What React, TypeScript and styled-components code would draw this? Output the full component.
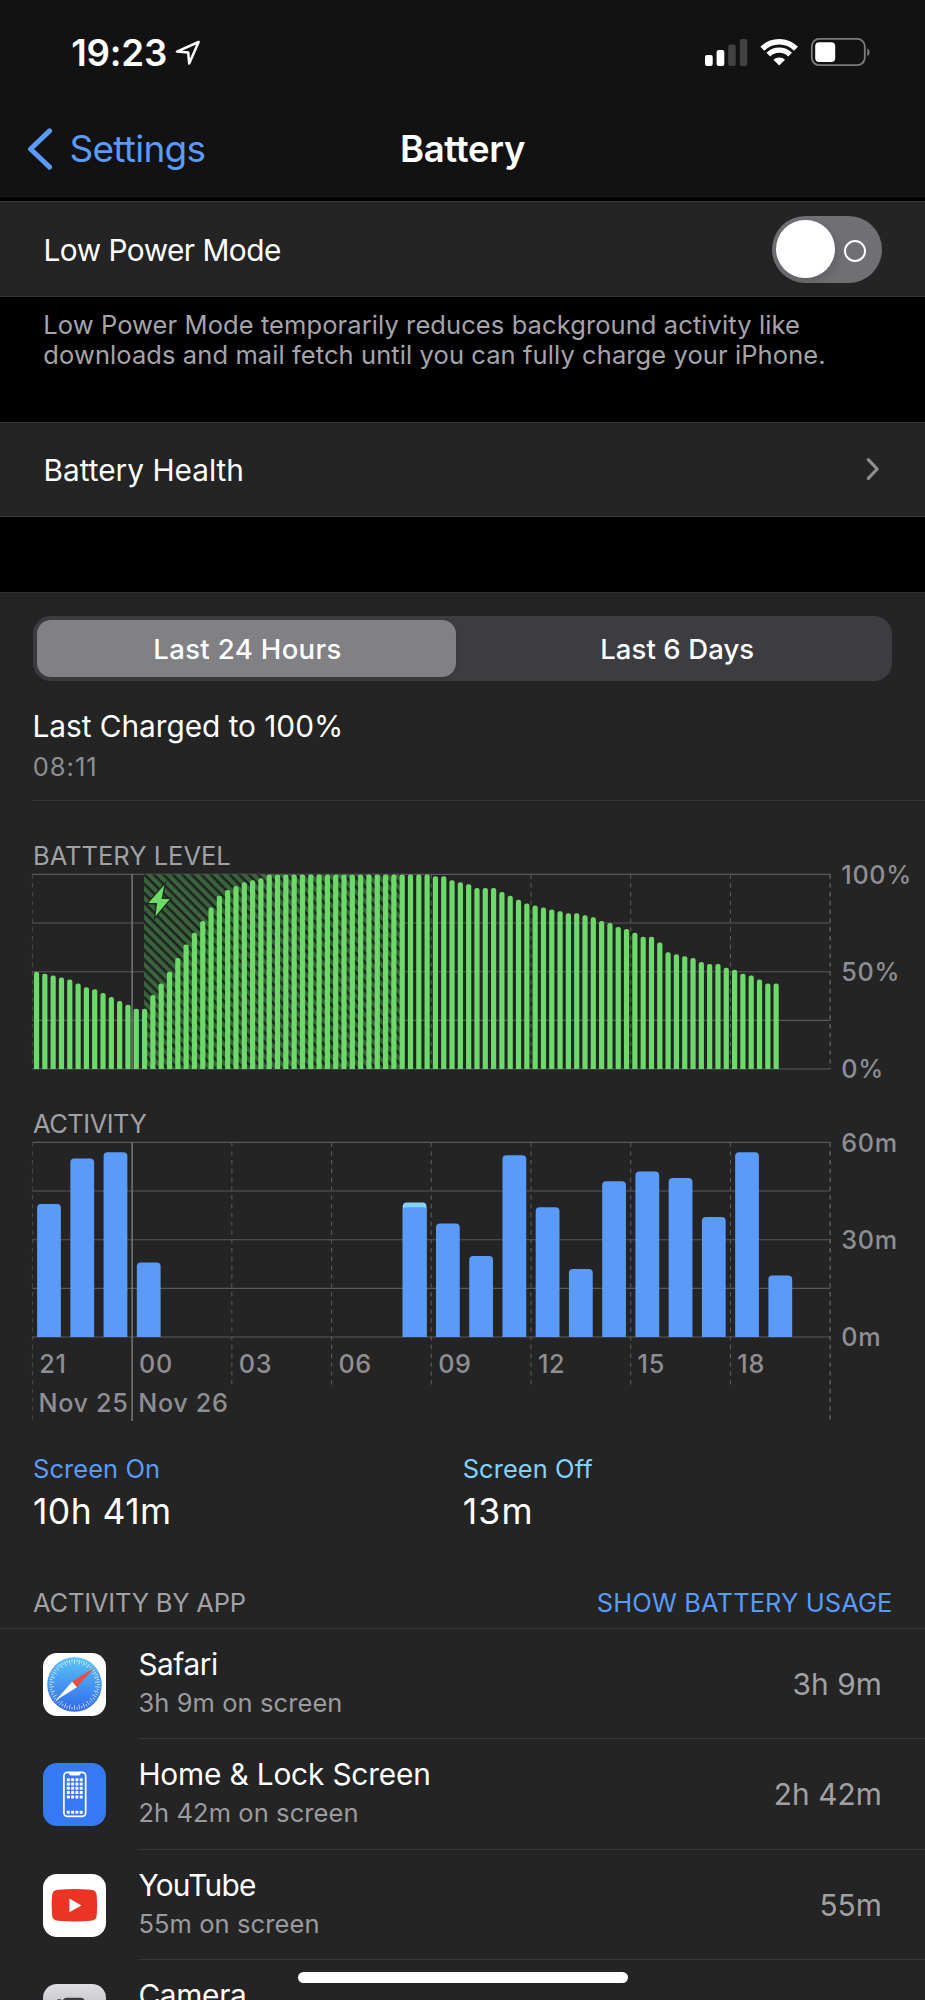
import React from "react";
import styled, { createGlobalStyle } from "styled-components";

const color = {
  bar: "#121212",
  cell: "#242424",
  line: "#363638",
  blue: "#5a9af8",
  cyan: "#84d2fa",
  green: "#6cd969",
  grid: "#59595c",
  secondary: "#a1a1a6",
  tertiary: "#8e8e93",
};

const GlobalStyle = createGlobalStyle`
  body {
    margin: 0;
    background: #000;
    color: #fff;
    font-family: Inter, "Liberation Sans", sans-serif;
    font-kerning: normal;
  }
`;

/* ---------- Screen frame ---------- */

const Screen = styled.main`
  position: relative;
  display: flex;
  flex-direction: column;
  width: 925px;
  height: 2000px;
  overflow: hidden;
  background: #000;
`;

const Header = styled.header`
  flex: none;
  box-sizing: border-box;
  height: 197px;
  background: ${color.bar};
  border-bottom: 1px solid #1e1e1f;
`;

const StatusBar = styled.div`
  display: flex;
  align-items: center;
  justify-content: space-between;
  height: 68px;
  padding: 18px 50px 18px 71.3px;
`;

const Clock = styled.div`
  display: flex;
  align-items: center;
  gap: 7.5px;
  padding-top: 1px;
  font-size: 36.7px;
  font-weight: 600;
  line-height: 68px;
  letter-spacing: -0.21px;
`;

const NavBar = styled.nav`
  display: grid;
  grid-template-columns: 1fr auto 1fr;
  align-items: center;
  height: 50px;
  margin-top: 20px;
  padding: 0 27px;
`;

const BackLink = styled.div`
  display: flex;
  align-items: center;
  gap: 16.5px;
  color: ${color.blue};
  font-size: 37px;
  line-height: 50px;
  letter-spacing: -0.72px;
`;

const NavTitle = styled.h1`
  margin: 0;
  font-size: 36.5px;
  font-weight: 600;
  line-height: 50px;
  letter-spacing: -0.32px;
`;

/* ---------- Settings cells ---------- */

const Cell = styled.div<{ $top: number; $height: number }>`
  flex: none;
  box-sizing: border-box;
  display: flex;
  align-items: center;
  justify-content: space-between;
  height: ${(p) => p.$height}px;
  margin-top: ${(p) => p.$top}px;
  padding: 0 43px 0 43.5px;
  background: ${color.cell};
  border-top: 1px solid ${color.line};
  border-bottom: 1px solid ${color.line};
`;

const CellLabel = styled.span<{ $tracking?: number; $drop?: number }>`
  padding-top: ${(p) => p.$drop ?? 0}px;
  font-size: 29.8px;
  line-height: 40px;
  letter-spacing: ${(p) => p.$tracking ?? 0}px;
`;

const Footnote = styled.p`
  flex: none;
  margin: 13px 0 0;
  padding-left: 43.3px;
  color: #a4a4aa;
  font-size: 25.5px;
  line-height: 30px;
  letter-spacing: 0.09px;
  white-space: nowrap;
`;

const Toggle = styled.div`
  box-sizing: border-box;
  display: flex;
  align-items: center;
  justify-content: space-between;
  width: 110.5px;
  height: 67px;
  padding: 0 16px 0 4.5px;
  border-radius: 34px;
  background: #6f6f74;
`;

const Knob = styled.div`
  width: 58.5px;
  height: 58.5px;
  border-radius: 50%;
  background: #fff;
  box-shadow: 2px 4px 8px rgba(0, 0, 0, 0.14);
`;

const OffMark = styled.div`
  box-sizing: border-box;
  width: 22px;
  height: 22px;
  margin-top: 3px;
  border: 2.2px solid #fff;
  border-radius: 50%;
`;

/* ---------- Usage panel ---------- */

const Panel = styled.section`
  flex: none;
  box-sizing: border-box;
  height: 1500px;
  margin-top: 75px;
  padding-top: 23px;
  background: ${color.cell};
  border-top: 1px solid #2f2f30;
`;

const Segmented = styled.div`
  box-sizing: border-box;
  display: grid;
  grid-template-columns: 419px 1fr;
  height: 65px;
  margin: 0 33px 0 32.5px;
  padding: 4px;
  border-radius: 18px;
  background: #3d3d41;
`;

const Segment = styled.button<{ $active?: boolean; $tracking: number; $inset: number }>`
  display: block;
  padding: 1px 0 0 ${(p) => p.$inset}px;
  border: 0;
  border-radius: 14px;
  background: ${(p) => (p.$active ? "#808085" : "transparent")};
  box-shadow: ${(p) => (p.$active ? "0 2px 5px rgba(0, 0, 0, 0.12)" : "none")};
  color: #fff;
  font: 500 27.5px/56px Inter, sans-serif;
  letter-spacing: ${(p) => p.$tracking}px;
`;

const ChargeTitle = styled.div`
  margin-top: 25px;
  padding-left: 32.5px;
  font-size: 29.8px;
  line-height: 40px;
  letter-spacing: -0.03px;
`;

const ChargeTime = styled.div`
  margin-top: 6px;
  padding-left: 32.7px;
  color: ${color.tertiary};
  font-size: 25.5px;
  line-height: 30px;
  letter-spacing: 1px;
`;

const Divider = styled.hr`
  height: 1px;
  margin: 18px 0 0 32px;
  border: 0;
  background: #343438;
`;

const ChartLabel = styled.h2<{ $top: number; $tracking?: number }>`
  margin: ${(p) => p.$top}px 0 1px;
  padding-left: 33px;
  color: ${color.secondary};
  font-size: 25.5px;
  font-weight: 400;
  line-height: 30px;
  letter-spacing: ${(p) => p.$tracking ?? 0}px;
`;

const Chart = styled.svg`
  display: block;
  margin-left: 30px;
  overflow: visible;
`;

const AxisText = styled.text`
  fill: ${color.tertiary};
  font-size: 25.2px;
  font-weight: 500;
  letter-spacing: 0.65px;
`;

const Totals = styled.div`
  display: grid;
  grid-template-columns: 429.7px 1fr;
  margin-top: 32px;
  padding-left: 33px;
`;

const TotalName = styled.div<{ $color: string }>`
  color: ${(p) => p.$color};
  font-size: 25.5px;
  line-height: 30px;
  letter-spacing: 0.05px;
`;

const TotalValue = styled.div<{ $tracking: number }>`
  margin-top: 8px;
  font-size: 35.5px;
  line-height: 40px;
  letter-spacing: ${(p) => p.$tracking}px;
`;

/* ---------- App list ---------- */

const ListHeader = styled.div`
  display: flex;
  justify-content: space-between;
  margin-top: 56px;
  padding: 0 32.5px 10px 33px;
  border-bottom: 1px solid ${color.line};
  font-size: 25.5px;
  line-height: 30px;
`;

const ListTitle = styled.span`
  color: ${color.secondary};
  letter-spacing: -0.2px;
`;

const ListAction = styled.span`
  color: ${color.blue};
  letter-spacing: 0.086px;
`;

const AppRow = styled.div`
  display: flex;
  height: 110.3px;
  padding-left: 43px;
`;

const IconSlot = styled.div`
  flex: none;
  width: 63px;
  padding-top: 24px;
  margin-right: 32.4px;
`;

const AppBody = styled.div`
  flex: 1;
  box-sizing: border-box;
  display: flex;
  justify-content: space-between;
  padding-right: 43px;
  border-bottom: 1px solid ${color.line};
`;

const AppName = styled.div<{ $tracking: number }>`
  margin-top: 16px;
  font-size: 29.8px;
  line-height: 38px;
  letter-spacing: ${(p) => p.$tracking}px;
`;

const AppDetail = styled.div`
  margin-top: 5px;
  color: #9b9b9f;
  font-size: 25.5px;
  line-height: 30px;
  letter-spacing: 0.085px;
`;

const AppTime = styled.div`
  color: #a1a1a4;
  font-size: 29.8px;
  line-height: 110px;
  letter-spacing: 0.09px;
`;

const HomeIndicator = styled.div`
  position: absolute;
  left: 297.5px;
  bottom: 17px;
  width: 330.5px;
  height: 11px;
  border-radius: 6px;
  background: #fff;
`;

/* ---------- Data ---------- */

const levels = [
  50, 49, 48, 47, 46, 44, 42, 41, 39, 37, 35, 33, 31, 31, 38, 44, 50, 57, 64, 70, 76, 83, 89, 92, 94,
  96, 97, 98, ...Array(20).fill(100), 99, 99, 97, 96, 95, 93, 93, 93, 91, 89, 87, 85, 84, 83, 82, 81,
  80, 80, 79, 78, 76, 75, 73, 72, 70, 68, 68, 65, 60, 59, 58, 57, 55, 54, 54, 52, 51, 49, 48, 46, 44, 44,
];

const activity: { hour: number; on: number; off?: number }[] = [
  { hour: 0, on: 41 },
  { hour: 1, on: 55 },
  { hour: 2, on: 57 },
  { hour: 3, on: 23 },
  { hour: 11, on: 40, off: 1.5 },
  { hour: 12, on: 35 },
  { hour: 13, on: 25 },
  { hour: 14, on: 56 },
  { hour: 15, on: 40 },
  { hour: 16, on: 21 },
  { hour: 17, on: 48 },
  { hour: 18, on: 51 },
  { hour: 19, on: 49 },
  { hour: 20, on: 37 },
  { hour: 21, on: 57 },
  { hour: 22, on: 19 },
];

const hours = ["21", "00", "03", "06", "09", "12", "15", "18"];

const LEFT = 2.4;
const SPAN = 99.72;
const RIGHT = LEFT + SPAN * 8;
const PLOT = 194.6;

/* Top edge of a rounded column that stands on the base line. */
const column = (x: number, w: number, top: number, base: number, r: number) =>
  `M${x} ${base}V${top + r}a${r} ${r} 0 0 1 ${r} ${-r}h${w - 2 * r}a${r} ${r} 0 0 1 ${r} ${r}V${base}Z`;

const Grid = ({ top, drop, shortDrop }: { top: number; drop: number; shortDrop: number }) => (
  <g stroke={color.grid}>
    {[0, 1, 2, 3, 4].map((i) => (
      <line key={i} x1={LEFT} x2={RIGHT} y1={top + (PLOT / 4) * i} y2={top + (PLOT / 4) * i} strokeWidth={1.1} />
    ))}
    {[0, 2, 3, 4, 5, 6, 7, 8].map((i) => (
      <line
        key={i}
        x1={LEFT + SPAN * i}
        x2={LEFT + SPAN * i}
        y1={top}
        y2={top + PLOT + (i % 8 === 0 ? drop : shortDrop)}
        strokeWidth={i === 8 ? 1.6 : 1.1}
        strokeDasharray="4.4 4.4"
        opacity={i === 0 ? 0.7 : 1}
      />
    ))}
    <line
      x1={LEFT + SPAN}
      x2={LEFT + SPAN}
      y1={top}
      y2={top + PLOT + drop}
      stroke="#78787c"
      strokeWidth={1.5}
    />
  </g>
);

const AxisLabels = ({ top, labels }: { top: number; labels: string[] }) => (
  <>
    {labels.map((label, i) => (
      <AxisText key={label} x={811.3} y={top + (PLOT / 2) * i + 9.4}>
        {label}
      </AxisText>
    ))}
  </>
);

const LevelChart = () => {
  const top = 2.4;
  const base = top + PLOT;
  const pitch = SPAN / 12;
  return (
    <Chart width={895} height={200} viewBox="0 0 895 200">
      <defs>
        <pattern id="hatch" width="6.7" height="6.7" patternUnits="userSpaceOnUse" patternTransform="rotate(45)">
          <rect width="6.7" height="6.7" fill="#38633b" />
          <rect width="6.7" height="2.6" fill="#202421" />
        </pattern>
      </defs>
      <Grid top={top} drop={0} shortDrop={0} />
      <rect x={114} y={top} width={260} height={PLOT} fill="url(#hatch)" />
      {levels.map((level, i) => (
        <path
          key={i}
          d={column(LEFT + pitch * i + 1.55, 5.2, base - (PLOT * level) / 100, base, 2.2)}
          fill={color.green}
        />
      ))}
      <path
        d="M134.300 13 118.300 31h8.800L125.500 44.300 139.800 26.900h-8.200Z"
        fill={color.green}
        stroke="#20281f"
        strokeWidth={2.6}
        paintOrder="stroke"
      />
      <AxisLabels top={top} labels={["100%", "50%", "0%"]} />
    </Chart>
  );
};

const ActivityChart = () => {
  const top = 2.4;
  const base = top + PLOT;
  const y = (minutes: number) => base - (PLOT * minutes) / 60;
  return (
    <Chart width={895} height={282} viewBox="0 0 895 282">
      <Grid top={top} drop={84} shortDrop={48.8} />
      {activity.map(({ hour, on, off }) => {
        const x = LEFT + (SPAN / 3) * hour + 4.7;
        return (
          <g key={hour}>
            {off && <path d={column(x, 23.8, y(on + off), base, 4)} fill={color.cyan} />}
            <path d={column(x, 23.8, y(on), base, 4)} fill={color.blue} />
          </g>
        );
      })}
      <AxisLabels top={top} labels={["60m", "30m", "0m"]} />
      {hours.map((hour, i) => (
        <AxisText key={hour} x={LEFT + SPAN * i + 6.9} y={232.6}>
          {hour}
        </AxisText>
      ))}
      <AxisText x={LEFT + 6.1} y={272.2}>
        Nov 25
      </AxisText>
      <AxisText x={LEFT + SPAN + 6.1} y={272.2}>
        Nov 26
      </AxisText>
    </Chart>
  );
};

/* ---------- Icons ---------- */

const LocationArrow = () => (
  <svg width="26" height="26" viewBox="0 0 26 26">
    <path
      d="M23.6 2 1.9 11.6l11.3.8 1 11.2Z"
      fill="none"
      stroke="#fff"
      strokeWidth="2.5"
      strokeLinejoin="round"
    />
  </svg>
);

const StatusIcons = () => (
  <svg width="170" height="32" viewBox="705 36 170 32">
    <rect x="705" y="55" width="7.7" height="11" rx="2" fill="#fff" />
    <rect x="716.6" y="50" width="7.7" height="16" rx="2" fill="#fff" />
    <rect x="728.2" y="44.6" width="7.5" height="21.4" rx="2" fill="#424242" />
    <rect x="739.8" y="39" width="7.5" height="27" rx="2" fill="#424242" />
    <g fill="none" stroke="#fff">
      <path d="M762.4 48.8A23.7 23.7 0 0 1 796 48.8" strokeWidth="5.6" />
      <path d="M768.3 54.7A15.4 15.4 0 0 1 790.1 54.7" strokeWidth="5.2" />
    </g>
    <path d="M779.2 65.6 773.4 59.8A8.2 8.2 0 0 1 785 59.8Z" fill="#fff" />
    <rect x="811.8" y="38.9" width="53" height="26.3" rx="7.5" fill="none" stroke="#7c7c7c" strokeWidth="1.8" />
    <rect x="815.2" y="42.2" width="20" height="19.8" rx="4" fill="#fff" />
    <path d="M867.3 48.2a4.6 4.6 0 0 1 0 8Z" fill="#7c7c7c" />
  </svg>
);

const BackChevron = () => (
  <svg width="26" height="42" viewBox="0 0 26 42">
    <path
      d="M22.6 2.9 3.5 21l19.1 18.1"
      fill="none"
      stroke={color.blue}
      strokeWidth="5"
      strokeLinecap="round"
      strokeLinejoin="round"
    />
  </svg>
);

const Disclosure = () => (
  <svg width="17" height="26" viewBox="0 0 17 26">
    <path
      d="M3.300 2.600 12.200 12l-8.900 9.400"
      fill="none"
      stroke="#8f8f93"
      strokeWidth="3.2"
      strokeLinecap="round"
      strokeLinejoin="round"
    />
  </svg>
);

const SafariIcon = () => (
  <svg width="63" height="63" viewBox="0 0 63 63">
    <defs>
      <linearGradient id="safari" x1="0" y1="0" x2="0" y2="1">
        <stop offset="0" stopColor="#5ac4f6" />
        <stop offset="1" stopColor="#3168ea" />
      </linearGradient>
    </defs>
    <rect width="63" height="63" rx="14" fill="#fff" />
    <circle cx="31.5" cy="31.5" r="27.3" fill="url(#safari)" />
    <g stroke="#fff" strokeWidth="0.8" opacity="0.8">
      {Array.from({ length: 60 }, (_, i) => (
        <line key={i} x1="31.5" x2="31.5" y1="6.2" y2={i % 2 ? 8.9 : 11} transform={`rotate(${i * 6} 31.5 31.5)`} />
      ))}
    </g>
    <path d="M51.8 14.2 29.1 28.7l4.8 5.6Z" fill="#ec4e3d" />
    <path d="M12.3 47.8 29.1 28.7l4.8 5.6Z" fill="#fff" />
  </svg>
);

const HomeScreenIcon = () => (
  <svg width="63" height="63" viewBox="0 0 63 63">
    <rect width="63" height="63" rx="14" fill="#3579f7" />
    <rect x="20.9" y="9.4" width="21.8" height="44" rx="3.6" fill="none" stroke="#fff" strokeWidth="1.7" />
    <path d="M26 9.2h11.6v1.2a2 2 0 0 1-2 2h-7.6a2 2 0 0 1-2-2Z" fill="#fff" />
    <g fill="#fff">
      {[16.7, 21, 25.3, 29.6, 33.9, 49.2].map((cy) =>
        [25.3, 29.6, 33.9, 38.2].map((cx) => (
          <rect key={`${cx}-${cy}`} x={cx - 1.5} y={cy - 1.5} width="3" height="3" rx="0.6" />
        ))
      )}
    </g>
  </svg>
);

const YouTubeIcon = () => (
  <svg width="63" height="63" viewBox="0 0 63 63">
    <rect width="63" height="63" rx="14" fill="#fff" />
    <path
      d="M15 15.8q16.4-1.6 32.8 0 5.5.4 5.9 5.6 1 9.8 0 19.8-.4 5.2-5.9 5.6-16.4 1.3-32.8 0-5.5-.4-5.9-5.6-1-10 0-19.8.4-5.2 5.9-5.6Z"
      fill="#ea3424"
    />
    <path d="M26.4 24.6v13.6l12-6.8Z" fill="#fff" />
  </svg>
);

const CameraIcon = () => (
  <svg width="63" height="63" viewBox="0 0 63 63">
    <defs>
      <linearGradient id="camera" x1="0" y1="0" x2="0" y2="1">
        <stop offset="0" stopColor="#dedee3" />
        <stop offset="1" stopColor="#9a9a9f" />
      </linearGradient>
    </defs>
    <rect width="63" height="63" rx="14" fill="url(#camera)" />
    <path
      d="M10 20q0-3.500 3.500-3.500h6q1.800-2.800 4-2.800h14.500q2.200 0 4 2.800h7.500q3.500 0 3.500 3.500v24q0 3.500-3.500 3.500h-36q-3.500 0-3.500-3.500Z"
      fill="#3a3a3c"
    />
    <rect x="14" y="15.300" width="4.500" height="2" rx="1" fill="#3a3a3c" />
    <circle cx="31.500" cy="31.500" r="11" fill="#c9c9ce" />
  </svg>
);

const apps = [
  { name: "Safari", tracking: -0.44, detail: "3h 9m on screen", time: "3h 9m", icon: <SafariIcon /> },
  { name: "Home & Lock Screen", tracking: -0.16, detail: "2h 42m on screen", time: "2h 42m", icon: <HomeScreenIcon /> },
  { name: "YouTube", tracking: -0.7, detail: "55m on screen", time: "55m", icon: <YouTubeIcon /> },
  { name: "Camera", tracking: -0.3, detail: "", time: "", icon: <CameraIcon /> },
];

export default function App() {
  return (
    <>
      <GlobalStyle />
      <Screen>
        <Header>
          <StatusBar>
            <Clock>
              19:23
              <LocationArrow />
            </Clock>
            <StatusIcons />
          </StatusBar>
          <NavBar>
            <BackLink>
              <BackChevron />
              Settings
            </BackLink>
            <NavTitle>Battery</NavTitle>
          </NavBar>
        </Header>

        <Cell $top={4} $height={96}>
          <CellLabel $tracking={-0.5} $drop={2}>
            Low Power Mode
          </CellLabel>
          <Toggle>
            <Knob />
            <OffMark />
          </Toggle>
        </Cell>
        <Footnote>
          Low Power Mode temporarily reduces background activity like
          <br />
          downloads and mail fetch until you can fully charge your iPhone.
        </Footnote>

        <Cell $top={52} $height={95}>
          <CellLabel>Battery Health</CellLabel>
          <Disclosure />
        </Cell>

        <Panel>
          <Segmented>
            <Segment $active $tracking={0.37} $inset={3}>
              Last 24 Hours
            </Segment>
            <Segment $tracking={0.1} $inset={11}>
              Last 6 Days
            </Segment>
          </Segmented>

          <ChargeTitle>Last Charged to 100%</ChargeTitle>
          <ChargeTime>08:11</ChargeTime>
          <Divider />

          <ChartLabel $top={40}>BATTERY LEVEL</ChartLabel>
          <LevelChart />
          <ChartLabel $top={37} $tracking={-0.5}>
            ACTIVITY
          </ChartLabel>
          <ActivityChart />

          <Totals>
            <div>
              <TotalName $color={color.blue}>Screen On</TotalName>
              <TotalValue $tracking={0.42}>10h 41m</TotalValue>
            </div>
            <div>
              <TotalName $color={color.cyan}>Screen Off</TotalName>
              <TotalValue $tracking={1.2}>13m</TotalValue>
            </div>
          </Totals>

          <ListHeader>
            <ListTitle>ACTIVITY BY APP</ListTitle>
            <ListAction>SHOW BATTERY USAGE</ListAction>
          </ListHeader>
          {apps.map((app) => (
            <AppRow key={app.name}>
              <IconSlot>{app.icon}</IconSlot>
              <AppBody>
                <div>
                  <AppName $tracking={app.tracking}>{app.name}</AppName>
                  <AppDetail>{app.detail}</AppDetail>
                </div>
                <AppTime>{app.time}</AppTime>
              </AppBody>
            </AppRow>
          ))}
        </Panel>
        <HomeIndicator />
      </Screen>
    </>
  );
}
